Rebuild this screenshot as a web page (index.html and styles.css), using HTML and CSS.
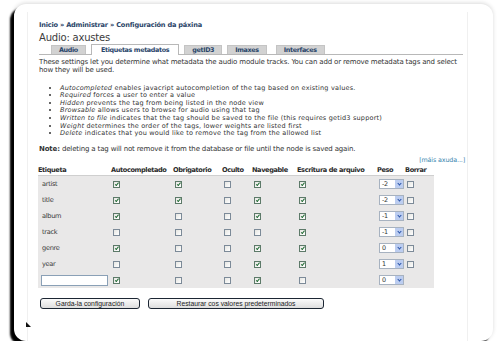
FILE: index.html
```html
<!DOCTYPE html>
<html>
<head>
    <title>Audio: axustes</title>
    <link rel="stylesheet" href="styles.css">
</head>
<body>
    <div class="window">
        <div class="frame">
            <div class="breadcrumb">
                <a href="#">Inicio</a> » <a href="#">Administrar</a> » <a href="#">Configuración da páxina</a>
            </div>
            <h2 class="title">Audio: axustes</h2>

            <ul class="tabs">
                <li><a href="#">Audio</a></li>
                <li class="active"><a href="#">Etiquetas metadatos</a></li>
                <li><a href="#">getID3</a></li>
                <li><a href="#">Imaxes</a></li>
                <li><a href="#">Interfaces</a></li>
            </ul>

            <p class="intro">These settings let you determine what metadata the audio module tracks. You can add or remove metadata tags and select how they will be used.</p>

            <ul class="help">
                <li><em>Autocompleted</em> enables javacript autocompletion of the tag based on existing values.</li>
                <li><em>Required</em> forces a user to enter a value</li>
                <li><em>Hidden</em> prevents the tag from being listed in the node view</li>
                <li><em>Browsable</em> allows users to browse for audio using that tag</li>
                <li><em>Written to file</em> indicates that the tag should be saved to the file (this requires getid3 support)</li>
                <li><em>Weight</em> determines the order of the tags, lower weights are listed first</li>
                <li><em>Delete</em> indicates that you would like to remove the tag from the allowed list</li>
            </ul>

            <p class="note"><strong>Note:</strong> deleting a tag will not remove it from the database or file until the node is saved again.</p>

            <div class="more"><a href="#">[máis axuda...]</a></div>

            <table class="tags">
                <colgroup>
                    <col class="c-tag"><col class="c-auto"><col class="c-req"><col class="c-hid">
                    <col class="c-nav"><col class="c-file"><col class="c-weight"><col class="c-del">
                </colgroup>
                <thead>
                    <tr>
                        <th>Etiqueta</th>
                        <th>Autocompletado</th>
                        <th>Obrigatorio</th>
                        <th>Oculto</th>
                        <th>Navegable</th>
                        <th>Escritura de arquivo</th>
                        <th>Peso</th>
                        <th>Borrar</th>
                    </tr>
                </thead>
                <tbody>
                    <tr>
                        <td>artist</td>
                        <td><span class="cb on"></span></td>
                        <td><span class="cb on"></span></td>
                        <td><span class="cb"></span></td>
                        <td><span class="cb on"></span></td>
                        <td><span class="cb on"></span></td>
                        <td><span class="sel">-2<i></i></span></td>
                        <td><span class="cb"></span></td>
                    </tr>
                    <tr>
                        <td>title</td>
                        <td><span class="cb on"></span></td>
                        <td><span class="cb on"></span></td>
                        <td><span class="cb"></span></td>
                        <td><span class="cb on"></span></td>
                        <td><span class="cb on"></span></td>
                        <td><span class="sel">-2<i></i></span></td>
                        <td><span class="cb"></span></td>
                    </tr>
                    <tr>
                        <td>album</td>
                        <td><span class="cb on"></span></td>
                        <td><span class="cb"></span></td>
                        <td><span class="cb"></span></td>
                        <td><span class="cb on"></span></td>
                        <td><span class="cb on"></span></td>
                        <td><span class="sel">-1<i></i></span></td>
                        <td><span class="cb"></span></td>
                    </tr>
                    <tr>
                        <td>track</td>
                        <td><span class="cb"></span></td>
                        <td><span class="cb"></span></td>
                        <td><span class="cb"></span></td>
                        <td><span class="cb"></span></td>
                        <td><span class="cb on"></span></td>
                        <td><span class="sel">-1<i></i></span></td>
                        <td><span class="cb"></span></td>
                    </tr>
                    <tr>
                        <td>genre</td>
                        <td><span class="cb on"></span></td>
                        <td><span class="cb"></span></td>
                        <td><span class="cb"></span></td>
                        <td><span class="cb on"></span></td>
                        <td><span class="cb on"></span></td>
                        <td><span class="sel">0<i></i></span></td>
                        <td><span class="cb"></span></td>
                    </tr>
                    <tr>
                        <td>year</td>
                        <td><span class="cb"></span></td>
                        <td><span class="cb"></span></td>
                        <td><span class="cb"></span></td>
                        <td><span class="cb on"></span></td>
                        <td><span class="cb on"></span></td>
                        <td><span class="sel">1<i></i></span></td>
                        <td><span class="cb"></span></td>
                    </tr>
                    <tr>
                        <td><input type="text" class="new-tag"></td>
                        <td><span class="cb on"></span></td>
                        <td><span class="cb"></span></td>
                        <td><span class="cb"></span></td>
                        <td><span class="cb on"></span></td>
                        <td><span class="cb"></span></td>
                        <td><span class="sel">0<i></i></span></td>
                        <td></td>
                    </tr>
                </tbody>
            </table>

            <div class="actions">
                <button class="button save">Garda-la configuración</button>
                <button class="button reset">Restaurar cos valores predeterminados</button>
            </div>
        </div>
        <span class="grip"></span>
    </div>
</body>
</html>
```

FILE: styles.css
```css
body {
    margin: 0;
    padding: 4px 7px 0 14px;
    background: #fff;
    font-family: "DejaVu Sans", Verdana, sans-serif;
    font-size: 7px;
    letter-spacing: -0.15px;
    color: #333;
}
a { text-decoration: none; }

.window {
    position: relative;
    height: 329px;
    padding: 8px 25px 0 13px;
    background: #fff;
    border-radius: 12px;
    box-shadow: -4px 4px 2px #000, 0 -1px 4px rgba(0,0,0,0.15);
}
.frame {
    height: 321px;
    padding: 9px 0 0 11px;
    border-left: 1px solid #f0f0f0;
    border-right: 1px solid #f0f0f0;
}

.breadcrumb {
    font-weight: bold;
    font-size: 6.6px;
    letter-spacing: -0.2px;
    color: #2b4568;
    line-height: 8px;
}
.breadcrumb a { color: #2b4568; }
.title {
    margin: 4px 0 0;
    font-size: 10px;
    font-weight: normal;
    letter-spacing: -0.2px;
    color: #3c3c3c;
    line-height: 10px;
}

.tabs {
    display: flex;
    align-items: flex-end;
    gap: 5px;
    width: 412px;
    margin: 0;
    padding: 0 0 0 12px;
    list-style: none;
    border-bottom: 1px solid #b8b8b8;
    height: 11px;
}
.tabs li a {
    display: block;
    padding: 0 7px;
    height: 8px;
    line-height: 8px;
    background: #d2d2d2;
    color: #29456a;
    font-weight: bold;
    font-size: 6.4px;
    letter-spacing: -0.35px;
    border: 1px solid #c4c4c4;
    border-bottom: none;
}
.tabs li.active a {
    height: 10px;
    line-height: 10px;
    background: #fff;
    border-color: #b8b8b8;
    margin-bottom: -1px;
    padding: 0 9px;
}
.tabs li:last-child { margin-left: 4px; }

.intro {
    margin: 3px 0 0;
    line-height: 8.3px;
}
.help {
    margin: 10px 0 0;
    padding-left: 21px;
    font-size: 6.5px;
    letter-spacing: 0.2px;
    line-height: 7.6px;
    list-style: disc;
}
.note {
    margin: 7px 0 0;
    line-height: 8.3px;
}
.more {
    width: 426px;
    text-align: right;
    margin-top: 3px;
    line-height: 8px;
    font-size: 6.4px;
}
.more a { color: #3987b0; }

.tags {
    width: 396px;
    table-layout: fixed;
    border-collapse: collapse;
    margin-left: -1px;
}
.c-tag { width: 73px; }
.c-auto { width: 62px; }
.c-req { width: 49px; }
.c-hid { width: 30px; }
.c-nav { width: 45px; }
.c-file { width: 80px; }
.c-weight { width: 28px; }
.c-del { width: 29px; }

.tags th {
    text-align: left;
    padding: 0;
    height: 11px;
    font-size: 6.6px;
    letter-spacing: -0.4px;
    font-weight: bold;
    color: #2b2b2b;
    border-bottom: 1px solid #cfcfcf;
    white-space: nowrap;
}
.tags td {
    padding: 0 0 0 2px;
    height: 16px;
    background: #e9e8e8;
    font-size: 6.6px;
    letter-spacing: -0.3px;
    color: #3a3a3a;
}
.tags td:first-child { padding-left: 4px; }

.cb {
    display: block;
    position: relative;
    width: 5px;
    height: 5px;
    border: 1px solid #7c8a98;
    background: linear-gradient(135deg, #e6e6e2, #fff);
}
.cb.on {
    border-color: #5d7a69;
}
.cb.on::after {
    content: "";
    position: absolute;
    left: 1.5px;
    top: 0;
    width: 1.2px;
    height: 2.6px;
    border: solid #1f6a32;
    border-width: 0 1px 1px 0;
    transform: rotate(40deg);
}

.sel {
    display: flex;
    align-items: center;
    width: 21px;
    height: 8px;
    padding-left: 2px;
    border: 1px solid #a7b2c0;
    background: #fff;
    font-size: 6.4px;
    color: #333;
    position: relative;
}
.sel i {
    margin-left: auto;
    width: 8px;
    height: 8px;
    background: #bccdf0;
    position: relative;
}
.sel i::after {
    content: "";
    position: absolute;
    left: 2.5px;
    top: 1.5px;
    width: 2px;
    height: 2px;
    border: solid #2852a8;
    border-width: 0 1px 1px 0;
    transform: rotate(45deg);
}

.new-tag {
    display: block;
    width: 67px;
    height: 11px;
    box-sizing: border-box;
    margin-left: -1px;
    border: 1px solid #8aa0b6;
    background: #fff;
    padding: 0;
}

.actions {
    display: flex;
    gap: 8px;
    margin-top: 10px;
    padding-left: 1px;
}
.button {
    height: 11px;
    padding: 0;
    border: 1px solid #1c2633;
    border-radius: 3px;
    background: linear-gradient(#fbfbfb, #dedede);
    font-family: "Liberation Sans", Arial, sans-serif;
    font-size: 6.8px;
    color: #222;
    line-height: 9px;
}
.button.save { width: 100px; }
.button.reset { width: 176px; }

.grip {
    position: absolute;
    left: 12px;
    bottom: 14px;
    width: 0;
    height: 0;
    border-left: 5px solid #111;
    border-top: 5px solid transparent;
}
```
